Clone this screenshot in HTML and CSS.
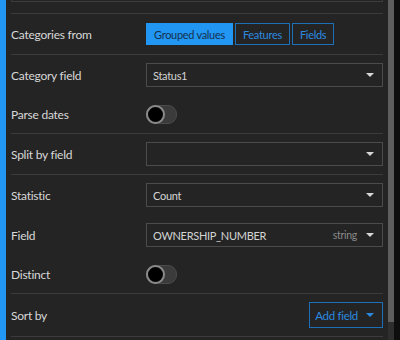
FILE: index.html
```html
<!DOCTYPE html>
<html lang="en">

<head>
    <meta charset="UTF-8">
    <title>Chart data settings</title>
    <link rel="stylesheet" href="styles.css">
</head>

<body>
    <div class="accent"></div>

    <div class="panel">
        <!-- previous block, scrolled up -->
        <div class="prev-box"></div>

        <div class="section">
            <div class="row">
                <label>Categories from</label>
                <div class="segmented">
                    <button class="seg active">Grouped values</button>
                    <button class="seg">Features</button>
                    <button class="seg">Fields</button>
                </div>
            </div>
        </div>

        <div class="section">
            <div class="row">
                <label>Category field</label>
                <div class="select"><span>Status1</span><i class="caret"></i></div>
            </div>
            <div class="row toggle-row">
                <label>Parse dates</label>
                <div class="toggle"><span class="knob"></span></div>
            </div>
        </div>

        <div class="section">
            <div class="row">
                <label>Split by field</label>
                <div class="select"><span></span><i class="caret"></i></div>
            </div>
        </div>

        <div class="section">
            <div class="row">
                <label>Statistic</label>
                <div class="select"><span>Count</span><i class="caret"></i></div>
            </div>
            <div class="row">
                <label>Field</label>
                <div class="select"><span>OWNERSHIP_NUMBER</span><em class="type">string</em><i class="caret"></i></div>
            </div>
            <div class="row toggle-row">
                <label>Distinct</label>
                <div class="toggle"><span class="knob"></span></div>
            </div>
        </div>

        <div class="section">
            <div class="row">
                <label>Sort by</label>
                <button class="add-field">Add field <i class="caret blue"></i></button>
            </div>
        </div>

        <div class="section last"></div>
    </div>

    <div class="scrollbar">
        <div class="thumb"></div>
    </div>
    <div class="edge"></div>
</body>

</html>
```

FILE: styles.css
```css
body {
    margin: 0;
    font-family: Lato, "Noto Sans", sans-serif;
    background-color: #242424;
    color: #d2d2d2;
    display: flex;
    height: 340px;
    overflow: hidden;
}

.accent {
    width: 6px;
    background-color: #2196f3;
    flex-shrink: 0;
}

.panel {
    width: 372px;
    margin-left: 5px;
    display: flex;
    flex-direction: column;
}

.prev-box {
    flex-shrink: 0;
    height: 10px;
    margin-top: -9px;
    border: 1px solid #3c3c3c;
    border-top: none;
    margin-bottom: 11px;
}

.section {
    flex-shrink: 0;
    border-top: 1px solid #3c3c3c;
    padding: 8px 0;
    display: flex;
    flex-direction: column;
    gap: 16px;
}

.row {
    display: flex;
    align-items: center;
    min-height: 24px;
}

.row label {
    width: 135px;
    font-size: 12px;
    letter-spacing: -0.25px;
    color: #d8d8d8;
}

.toggle-row {
    min-height: 22px;
}

.segmented {
    display: flex;
    gap: 2px;
}

.seg {
    height: 22px;
    padding: 0 7px;
    border: 1px solid #1d6fb8;
    background: transparent;
    color: #2b8ae0;
    font-family: Lato, "Noto Sans", sans-serif;
    font-size: 11px;
    letter-spacing: -0.3px;
}

.seg.active {
    background-color: #2196f3;
    border-color: #2196f3;
    color: #15314d;
    padding: 0 7px;
}

.select {
    flex: 1;
    height: 22px;
    border: 1px solid #4b4b4b;
    display: flex;
    align-items: center;
    padding: 0 8px 0 6px;
    font-size: 11px;
    letter-spacing: -0.3px;
    color: #d4d4d4;
}

.select span {
    flex: 1;
}

.type {
    font-style: normal;
    color: #8a8a8a;
    font-size: 10.5px;
    margin-right: 9px;
}

.caret {
    width: 0;
    height: 0;
    border-left: 4px solid transparent;
    border-right: 4px solid transparent;
    border-top: 4px solid #d6d6d6;
}

.caret.blue {
    border-top-color: #2b8ae0;
    margin-left: 8px;
}

.toggle {
    width: 29px;
    height: 17px;
    border-radius: 9px;
    background-color: #3b3b3b;
    border: 1px solid #4a4a4a;
    position: relative;
}

.knob {
    position: absolute;
    left: -1px;
    top: -1px;
    width: 15px;
    height: 15px;
    border-radius: 50%;
    background-color: #000;
    border: 2px solid #8a8a8a;
}

.add-field {
    margin-left: auto;
    height: 26px;
    padding: 0 8px 0 5px;
    border: 1px solid #1d6fb8;
    background: transparent;
    color: #2b8ae0;
    font-family: Lato, "Noto Sans", sans-serif;
    font-size: 11.5px;
    letter-spacing: -0.3px;
    display: flex;
    align-items: center;
}

.scrollbar {
    width: 6px;
    margin-left: 5px;
    background-color: #2e2e2e;
}

.thumb {
    height: 322px;
    background-color: #5e5e5e;
}

.edge {
    flex: 1;
    background-color: #0e0e0e;
}
```
